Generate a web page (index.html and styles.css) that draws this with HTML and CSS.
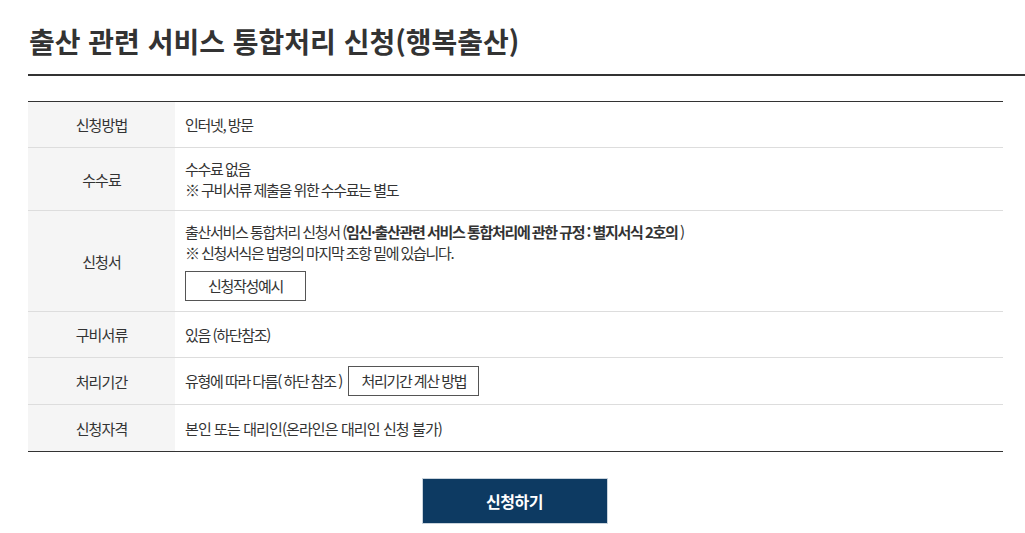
FILE: index.html
```html
<!DOCTYPE html>
<html lang="ko">
<head>
    <meta charset="UTF-8">
    <meta name="viewport" content="width=device-width, initial-scale=1.0">
    <title>출산 관련 서비스 통합처리 신청(행복출산)</title>
    <link rel="stylesheet" href="styles.css">
</head>
<body>
    <div class="page">
        <h1 class="page-title">출산 관련 서비스 통합처리 신청(행복출산)</h1>

        <!-- 신청 정보 표 -->
        <table class="info-table">
            <tbody>
                <tr>
                    <th>신청방법</th>
                    <td>인터넷, 방문</td>
                </tr>
                <tr>
                    <th>수수료</th>
                    <td>
                        <p>수수료 없음</p>
                        <p>※ 구비서류 제출을 위한 수수료는 별도</p>
                    </td>
                </tr>
                <tr>
                    <th>신청서</th>
                    <td>
                        <p>출산서비스 통합처리 신청서 (<strong>임신·출산관련 서비스 통합처리에 관한 규정 : 별지서식 2호의</strong> )</p>
                        <p>※ 신청서식은 법령의 마지막 조항 밑에 있습니다.</p>
                        <p class="btn-line"><button class="line-btn">신청작성예시</button></p>
                    </td>
                </tr>
                <tr>
                    <th>구비서류</th>
                    <td>있음 (하단참조)</td>
                </tr>
                <tr>
                    <th>처리기간</th>
                    <td class="inline-cell">
                        <span>유형에 따라 다름( 하단 참조 )</span>
                        <button class="line-btn">처리기간 계산 방법</button>
                    </td>
                </tr>
                <tr class="last-row">
                    <th>신청자격</th>
                    <td class="wide-words">본인 또는 대리인(온라인은 대리인 신청 불가)</td>
                </tr>
            </tbody>
        </table>

        <div class="submit-area">
            <button class="submit-btn">신청하기</button>
        </div>
    </div>
</body>
</html>
```

FILE: styles.css
```css
body {
    margin: 0;
    padding: 0;
    background-color: #fff;
    color: #333;
    font-family: "Noto Sans CJK KR", "Noto Sans", sans-serif;
}

.page {
    padding-left: 28px;
}

.page-title {
    margin: 0;
    padding: 22px 0 14px 1px;
    font-size: 28px;
    font-weight: 700;
    letter-spacing: 0;
    line-height: 38px;
    color: #333;
    border-bottom: 2px solid #333;
}

.info-table {
    width: 975px;
    margin-top: 25px;
    border-collapse: collapse;
    border-top: 1px solid #333;
    border-bottom: 1px solid #333;
    font-size: 15px;
    letter-spacing: -1.3px;
    word-spacing: -0.5px;
}

.info-table th,
.info-table td {
    border-top: 1px solid #ddd;
    text-align: left;
    vertical-align: middle;
}

.info-table tr:first-child th,
.info-table tr:first-child td {
    border-top: none;
}

.info-table th {
    width: 147px;
    height: 45px;
    padding: 0;
    background-color: #f5f5f5;
    font-weight: 400;
    letter-spacing: -0.9px;
    text-align: center;
}

.info-table .last-row th {
    height: 46px;
}

.info-table td {
    padding: 10px 10px;
    line-height: 21px;
}

.info-table .wide-words {
    letter-spacing: -0.9px;
    word-spacing: 0;
}

.info-table td p {
    margin: 0;
}

.info-table td strong {
    font-weight: 700;
}

.info-table .btn-line {
    padding-top: 8px;
    line-height: 0;
}

.line-btn {
    height: 30px;
    padding: 0 22px;
    background-color: #fff;
    border: 1px solid #555;
    color: #333;
    font-family: inherit;
    font-size: 15px;
    letter-spacing: -1.3px;
    word-spacing: -0.5px;
    line-height: 28px;
    cursor: pointer;
}

.info-table .inline-cell {
    padding-top: 8px;
    padding-bottom: 8px;
}

.inline-cell .line-btn {
    margin-left: 4px;
    padding: 0 12px;
}

.submit-area {
    display: flex;
    justify-content: center;
    width: 973px;
    padding-top: 26px;
}

.submit-btn {
    width: 186px;
    height: 46px;
    background-color: #0d3a62;
    border: 1px solid #c9d3dc;
    color: #fff;
    font-family: inherit;
    font-size: 16px;
    font-weight: 700;
    letter-spacing: -0.5px;
    cursor: pointer;
}
```
